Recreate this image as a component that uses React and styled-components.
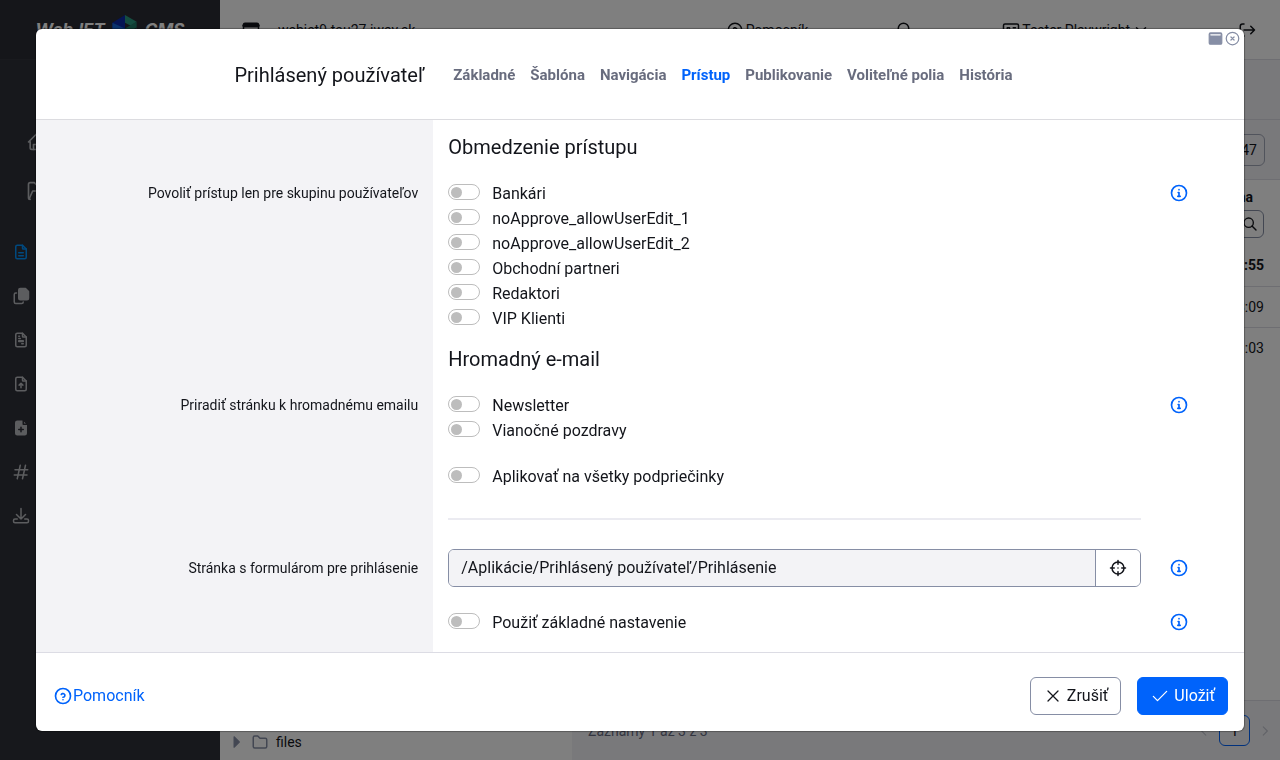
import React, { useState } from "react";
import styled, { createGlobalStyle } from "styled-components";

const GlobalStyle = createGlobalStyle`
  *, *::before, *::after { box-sizing: border-box; }
  body {
    margin: 0;
    background: #ffffff;
    color: #13151b;
    font-family: Roboto, "Noto Sans", sans-serif;
    font-size: 16px;
    line-height: 24px;
  }
  button, input { font: inherit; color: inherit; }
  h1, h2, p, ul { margin: 0; padding: 0; font-weight: 400; }
`;

/* ---------- icons ---------- */

const Svg = styled.svg`
  display: block;
  flex: none;
  width: ${(p) => p.$size}px;
  height: ${(p) => p.$size}px;
  fill: none;
  stroke: currentColor;
  stroke-width: ${(p) => p.$stroke};
  stroke-linecap: round;
  stroke-linejoin: round;
`;

const fileOutline = (
  <>
    <path d="M14 3v4a1 1 0 0 0 1 1h4" />
    <path d="M17 21h-10a2 2 0 0 1 -2 -2v-14a2 2 0 0 1 2 -2h7l5 5v11a2 2 0 0 1 -2 2z" />
  </>
);

const icons = {
  info: (
    <>
      <circle cx="12" cy="12" r="9" />
      <path d="M12 8h.01M11 11.500h1v4.500M10.500 16h3" />
    </>
  ),
  help: (
    <>
      <circle cx="12" cy="12" r="9" />
      <path d="M12 16.500v.01M12 13.500a2.200 2.200 0 0 0 1 -4.200a2.200 2.200 0 0 0 -3 .9" />
    </>
  ),
  check: <path d="M4 12.500l5 5l11 -11" />,
  x: <path d="M6 6l12 12M18 6l-12 12" />,
  circleX: (
    <>
      <circle cx="12" cy="12" r="10" />
      <path d="M9.500 9.500l5 5M14.500 9.500l-5 5" />
    </>
  ),
  windowFilled: (
    <>
      <rect x="2" y="3" width="20" height="18" rx="2" fill="currentColor" />
      <path d="M4.500 6h15" stroke="#ffffff" />
    </>
  ),
  windowOutline: (
    <>
      <rect x="2" y="3" width="20" height="18" rx="2" />
      <path d="M3 6h18" strokeWidth="5" />
    </>
  ),
  target: (
    <>
      <circle cx="12" cy="12" r="8" />
      <path d="M12 2v5M12 17v5M2 12h5M17 12h5M12 12h.01" />
    </>
  ),
  search: (
    <>
      <circle cx="10" cy="10" r="7" />
      <path d="M21 21l-6 -6" />
    </>
  ),
  badge: (
    <>
      <rect x="2" y="4" width="20" height="16" rx="2" />
      <path d="M7 9h3v3h-3zM15 9h3M15 13h3M7 16h10" />
    </>
  ),
  logout: (
    <>
      <path d="M8 4h-2a3 3 0 0 0 -3 3v10a3 3 0 0 0 3 3h2" />
      <path d="M8 12h14M17 7l5 5l-5 5" />
    </>
  ),
  down: <path d="M6 9l6 6l6 -6" />,
  left: <path d="M15 5l-7 7l7 7" />,
  right: <path d="M9 5l7 7l-7 7" />,
  caret: <path d="M7 3l9 9l-9 9z" fill="currentColor" />,
  folder: (
    <path d="M5 4h4l3 3h7a2 2 0 0 1 2 2v9a2 2 0 0 1 -2 2h-14a2 2 0 0 1 -2 -2v-12a2 2 0 0 1 2 -2z" />
  ),
  home: (
    <>
      <path d="M5 12h-2l9 -9l9 9h-2" />
      <path d="M5 12v7a2 2 0 0 0 2 2h10a2 2 0 0 0 2 -2v-7" />
      <path d="M9 21v-6h6v6" />
    </>
  ),
  image: (
    <>
      <path d="M5 22a2 2 0 0 1 -2 -2v-16a2 2 0 0 1 2 -2h5l3 3h7" />
      <path d="M4 21l4 -9h14" />
    </>
  ),
  fileText: (
    <>
      {fileOutline}
      <path d="M9 13h6M9 17h6" />
    </>
  ),
  copy: (
    <>
      <path
        d="M11 2h7l4 4v9a2 2 0 0 1 -2 2h-9a2 2 0 0 1 -2 -2v-11a2 2 0 0 1 2 -2z"
        fill="currentColor"
      />
      <path d="M6 8h-1a2 2 0 0 0 -2 2v10a2 2 0 0 0 2 2h8a2 2 0 0 0 2 -2" />
    </>
  ),
  fileInvoice: (
    <>
      {fileOutline}
      <path d="M9 7h1M9 10h2M9 13h6v1h-6zM13 17h2" />
    </>
  ),
  fileUp: (
    <>
      {fileOutline}
      <path d="M12 17v-6M9.500 13.500l2.500 -2.500l2.500 2.500" />
    </>
  ),
  filePlus: (
    <>
      <path
        d="M17 21h-10a2 2 0 0 1 -2 -2v-14a2 2 0 0 1 2 -2h7l5 5v11a2 2 0 0 1 -2 2z"
        fill="currentColor"
      />
      <path d="M12 11v6M9 14h6M15 2v5h5" stroke="#2e3038" />
    </>
  ),
  hash: <path d="M4 9h17M3 16h17M11 3l-4 18M18 3l-4 18" />,
  download: (
    <path d="M7 16h-3a2 2 0 0 0 -2 2v1a2 2 0 0 0 2 2h16a2 2 0 0 0 2 -2v-1a2 2 0 0 0 -2 -2h-3M6 10l6 6l6 -6M12 2v14" />
  ),
};

function Icon({ name, size = 20, stroke = 2 }) {
  return (
    <Svg viewBox="0 0 24 24" $size={size} $stroke={stroke} aria-hidden="true">
      {icons[name]}
    </Svg>
  );
}

/* ---------- page behind the dialog ---------- */

const Page = styled.div`
  display: flex;
  height: 100vh;
  overflow: hidden;
  font-size: 14px;
`;

const Sidebar = styled.aside`
  flex: 0 0 220px;
  background: #2e3038;
  color: #b9babf;
`;

const Brand = styled.div`
  display: flex;
  align-items: center;
  justify-content: center;
  gap: 6px;
  height: 60px;
  background: #2b2c35;
  border-bottom: 1px solid #32343c;
  color: #ffffff;
  font-family: Inter, sans-serif;
  font-size: 17px;
  font-style: italic;
  font-weight: 700;
`;

const Cube = styled.svg`
  width: 28px;
  height: 30px;
`;

const MainNav = styled.nav`
  display: flex;
  flex-direction: column;
  gap: 29px;
  padding: 72px 26px 42px;
`;

const SubNav = styled.nav`
  display: flex;
  flex-direction: column;
  gap: 26px;
  padding: 0 12px;
`;

const NavLink = styled.a`
  display: flex;
  color: ${(p) => (p.$active ? "#0092ff" : "inherit")};
`;

const Workspace = styled.div`
  flex: 1;
  min-width: 0;
  display: flex;
  flex-direction: column;
`;

const TopBar = styled.header`
  display: flex;
  align-items: center;
  gap: 88px;
  height: 60px;
  padding: 0 24px 0 22px;
  border-bottom: 1px solid #dcdce4;
`;

const TopItem = styled.div`
  display: flex;
  align-items: center;
  gap: ${(p) => p.$gap || 2}px;
  margin-right: ${(p) => (p.$first ? "auto" : "0")};
`;

const Columns = styled.div`
  flex: 1;
  display: flex;
  min-height: 0;
`;

const Tree = styled.div`
  flex: 0 0 352px;
  display: flex;
  flex-direction: column;
  justify-content: flex-end;
  padding: 6px 10px;
`;

const TreeItem = styled.div`
  display: flex;
  align-items: center;
  gap: 7px;
  color: #868ea5;
`;

const TreeLabel = styled.span`
  color: #13151b;
`;

const Records = styled.main`
  flex: 1;
  min-width: 0;
  display: flex;
  flex-direction: column;
`;

const RecordsTitle = styled.div`
  height: 60px;
  background: #f3f3f6;
  border-bottom: 1px solid #dcdce4;
`;

const RecordsTools = styled.div`
  display: flex;
  align-items: center;
  justify-content: flex-end;
  height: 60px;
  padding: 0 15px;
  background: #f3f3f6;
  border-bottom: 1px solid #dcdce4;
`;

const ToolButton = styled.button`
  height: 32px;
  padding: 0 7px 0 12px;
  border: 1px solid #a3a8b9;
  border-radius: 6px;
  background: none;
`;

const Table = styled.table`
  width: 100%;
  border-collapse: collapse;
  text-align: right;
`;

const HeadCell = styled.th`
  padding: ${(p) => (p.$filter ? "0 16px 5px" : "4px 27px 0")};
  line-height: 26px;
`;

const Filter = styled.button`
  display: inline-flex;
  align-items: center;
  justify-content: center;
  width: 29px;
  height: 28px;
  padding: 0;
  border: 1px solid #868ea5;
  border-radius: 0 6px 6px 0;
  background: none;
`;

const Cell = styled.td`
  height: 41px;
  padding: 0 16px;
  border-bottom: ${(p) => (p.$last ? "0" : "1px solid #dcdce4")};
  font-weight: ${(p) => (p.$bold ? 700 : 400)};
`;

const RecordsFooter = styled.footer`
  display: flex;
  align-items: center;
  gap: 8px;
  height: 60px;
  margin-top: auto;
  padding: 0 8px 0 16px;
  background: #f3f3f6;
  border-top: 1px solid #dcdce4;
  color: #686c83;
`;

const Summary = styled.p`
  margin-right: auto;
`;

const PageButton = styled.button`
  display: flex;
  align-items: center;
  justify-content: center;
  width: ${(p) => (p.$current ? 31 : 14)}px;
  height: 31px;
  padding: 0;
  border: ${(p) => (p.$current ? "1px solid #0063fb" : "0")};
  border-radius: 6px;
  background: none;
  color: ${(p) => (p.$current ? "#13151b" : "#c4c6d0")};
`;

/* ---------- dialog ---------- */

const Backdrop = styled.div`
  position: fixed;
  inset: 0;
  display: flex;
  padding: 29px 36px;
  background: rgba(0, 0, 0, 0.5);
`;

const Dialog = styled.form`
  position: relative;
  flex: 1;
  min-width: 0;
  display: flex;
  flex-direction: column;
  border-radius: 6px;
  background: #ffffff;
  box-shadow: 0 0 1px 1px rgba(0, 0, 0, 0.3);
  overflow: hidden;
`;

const WindowControls = styled.div`
  position: absolute;
  top: 2px;
  right: 4px;
  display: flex;
  gap: 2px;
  color: #868ea5;
`;

const PlainButton = styled.button`
  display: flex;
  padding: 0;
  border: 0;
  background: none;
`;

const twoColumns = `
  display: grid;
  grid-template-columns: minmax(0, 49fr) minmax(0, 100fr);
`;

const DialogHeader = styled.header`
  ${twoColumns}
  align-items: center;
  height: 91px;
  padding-top: 2px;
  border-bottom: 1px solid #dcdce0;
`;

const Title = styled.h1`
  padding-right: 9px;
  text-align: right;
  font-size: 20px;
`;

const Tabs = styled.div`
  display: flex;
  gap: 15px;
  padding-left: 20px;
`;

const Tab = styled.button`
  padding: 0;
  border: 0;
  background: none;
  color: ${(p) => (p.$active ? "#0063fb" : "#686c7e")};
  font-size: 15px;
  font-weight: 700;
  white-space: nowrap;
`;

const DialogBody = styled.div`
  flex: 1;
  min-height: 0;
  display: flex;
  flex-direction: column;
  overflow: hidden auto;
`;

const Row = styled.div`
  ${twoColumns}
  flex: ${(p) => (p.$fill ? "1 0 auto" : "none")};
`;

const rowSpace = { none: 0, small: 20, medium: 23, large: 29 };

const LabelCell = styled.div`
  padding: ${(p) => rowSpace[p.$space || "none"]}px 15px 0;
  background: #f3f3f6;
  text-align: right;
  font-size: 14px;
`;

const FieldCell = styled.div`
  display: flex;
  align-items: ${(p) => (p.$middle ? "center" : "flex-start")};
  padding: ${(p) => rowSpace[p.$space || "none"]}px 0 0 15px;
`;

const Field = styled.div`
  flex: 1;
  min-width: 0;
`;

const Aside = styled.div`
  flex: 0 0 103px;
  padding: ${(p) => (p.$middle ? 0 : 2)}px 28px 0;
  color: #0063fb;
`;

const RowLabel = styled.label`
  line-height: ${(p) => (p.$tall ? 38 : 25)}px;
`;

const SectionTitle = styled.h2`
  padding: 15px 0 22px;
  font-size: 20px;
`;

const OptionList = styled.ul`
  padding-bottom: 1px;
  list-style: none;
`;

const Option = styled.label`
  display: flex;
  align-items: center;
  gap: 12px;
  height: 25px;
`;

const Switch = styled.input`
  appearance: none;
  display: flex;
  align-items: center;
  flex: none;
  width: 32px;
  height: 16px;
  margin: 0 0 3px;
  padding: 0 2px;
  border: 1px solid #bdbdbd;
  border-radius: 8px;
  background: #ffffff;

  &::before {
    content: "";
    width: 11px;
    height: 11px;
    border-radius: 50%;
    background: #bdbdbd;
  }

  &:checked {
    justify-content: flex-end;
    border-color: #0063fb;
  }

  &:checked::before {
    background: #0063fb;
  }
`;

const Divider = styled.hr`
  width: 100%;
  height: 2px;
  margin: 0;
  border: 0;
  background: #ebebf1;
`;

const InputGroup = styled.div`
  display: flex;
  height: 38px;
  border: 1px solid #868ea5;
  border-radius: 6px;
  overflow: hidden;
`;

const TextInput = styled.input`
  flex: 1;
  min-width: 0;
  padding: 0 12px;
  border: 0;
  background: #f3f3f6;
`;

const InputButton = styled.button`
  display: flex;
  align-items: center;
  justify-content: center;
  width: 45px;
  padding: 0;
  border: 0;
  border-left: 1px solid #868ea5;
  background: #ffffff;
`;

const DialogFooter = styled.footer`
  display: flex;
  align-items: center;
  gap: 16px;
  height: 79px;
  padding: 8px 16px 0;
  border-top: 1px solid #dcdce4;
`;

const HelpLink = styled.a`
  display: flex;
  align-items: center;
  margin-right: auto;
  padding: 0 1px;
  color: #0063fb;
  text-decoration: none;
`;

const Button = styled.button`
  display: flex;
  align-items: center;
  gap: 4px;
  height: 38px;
  padding: 0 12px;
  border: 1px solid ${(p) => (p.$primary ? "#0063fb" : "#868ea5")};
  border-radius: 6px;
  background: ${(p) => (p.$primary ? "#0063fb" : "#ffffff")};
  color: ${(p) => (p.$primary ? "#ffffff" : "#13151b")};
`;

const tabs = [
  "Základné",
  "Šablóna",
  "Navigácia",
  "Prístup",
  "Publikovanie",
  "Voliteľné polia",
  "História",
];

const userGroups = [
  "Bankári",
  "noApprove_allowUserEdit_1",
  "noApprove_allowUserEdit_2",
  "Obchodní partneri",
  "Redaktori",
  "VIP Klienti",
];

const mailGroups = ["Newsletter", "Vianočné pozdravy"];

const subItems = ["fileText", "copy", "fileInvoice", "fileUp", "filePlus", "hash", "download"];

const times = ["11:55", "13:09", "11:03"];

function InfoButton() {
  return (
    <PlainButton type="button" aria-label="Info">
      <Icon name="info" />
    </PlainButton>
  );
}

function FormRow({ space, label, info, fill, middle, children }) {
  return (
    <Row $fill={fill}>
      <LabelCell $space={space}>{label}</LabelCell>
      <FieldCell $space={space} $middle={middle}>
        <Field>{children}</Field>
        <Aside $middle={middle}>{info && <InfoButton />}</Aside>
      </FieldCell>
    </Row>
  );
}

function SwitchOption({ children }) {
  return (
    <Option>
      <Switch type="checkbox" role="switch" />
      {children}
    </Option>
  );
}

function Options({ items, labelledBy }) {
  return (
    <OptionList role="group" aria-labelledby={labelledBy}>
      {items.map((item) => (
        <li key={item}>
          <SwitchOption>{item}</SwitchOption>
        </li>
      ))}
    </OptionList>
  );
}

function Background() {
  return (
    <Page>
      <Sidebar>
        <Brand>
          WebJET
          <Cube viewBox="0 0 28 31" aria-hidden="true">
            <path d="M14 0L1 8v14l13 8z" fill="#0a2aa8" />
            <path d="M1 8l13 6v16l-13 -8z" fill="#1466d8" />
            <path d="M14 0l12 7l-6 4l-6 -3z" fill="#2a9a80" />
            <path d="M26 7v6l-12 7v-6z" fill="#1f7d68" />
            <path d="M14 20l12 -6v8l-12 8z" fill="#35c2a0" />
          </Cube>
          CMS
        </Brand>
        <MainNav>
          <NavLink href="#home" aria-label="Domov"><Icon name="home" /></NavLink>
          <NavLink href="#pages" aria-label="Stránky"><Icon name="image" /></NavLink>
        </MainNav>
        <SubNav>
          {subItems.map((name) => (
            <NavLink key={name} href={`#${name}`} aria-label={name} $active={name === "fileText"}>
              <Icon name={name} size={18} />
            </NavLink>
          ))}
        </SubNav>
      </Sidebar>
      <Workspace>
        <TopBar>
          <TopItem $gap={18} $first>
            <Icon name="windowOutline" size={18} />
            webjet9.tau27.iway.sk
          </TopItem>
          <TopItem><Icon name="help" size={18} />Pomocník</TopItem>
          <TopItem><Icon name="search" size={18} /></TopItem>
          <TopItem>
            <Icon name="badge" size={18} />
            Tester Playwright
            <Icon name="down" size={18} />
          </TopItem>
          <TopItem><Icon name="logout" size={18} /></TopItem>
        </TopBar>
        <Columns>
          <Tree>
            <TreeItem>
              <Icon name="caret" size={14} />
              <Icon name="folder" size={18} />
              <TreeLabel>files</TreeLabel>
            </TreeItem>
          </Tree>
          <Records>
            <RecordsTitle />
            <RecordsTools><ToolButton type="button">47</ToolButton></RecordsTools>
            <Table>
              <thead>
                <tr><HeadCell>Zmena</HeadCell></tr>
                <tr>
                  <HeadCell $filter>
                    <Filter type="button" aria-label="Hľadať"><Icon name="search" size={16} /></Filter>
                  </HeadCell>
                </tr>
              </thead>
              <tbody>
                {times.map((time, i) => (
                  <tr key={time}>
                    <Cell $bold={i === 0} $last={i === times.length - 1}>{time}</Cell>
                  </tr>
                ))}
              </tbody>
            </Table>
            <RecordsFooter>
              <Summary>Záznamy 1 až 3 z 3</Summary>
              <PageButton type="button" aria-label="Predchádzajúca"><Icon name="left" size={14} /></PageButton>
              <PageButton type="button" $current>1</PageButton>
              <PageButton type="button" aria-label="Nasledujúca"><Icon name="right" size={14} /></PageButton>
            </RecordsFooter>
          </Records>
        </Columns>
      </Workspace>
    </Page>
  );
}

export default function App() {
  const [active, setActive] = useState("Prístup");

  return (
    <>
      <GlobalStyle />
      <Background />
      <Backdrop>
        <Dialog role="dialog" aria-labelledby="dialog-title" onSubmit={(e) => e.preventDefault()}>
          <DialogHeader>
            <Title id="dialog-title">Prihlásený používateľ</Title>
            <Tabs role="tablist">
              {tabs.map((tab) => (
                <Tab
                  key={tab}
                  type="button"
                  role="tab"
                  aria-selected={tab === active}
                  $active={tab === active}
                  onClick={() => setActive(tab)}
                >
                  {tab}
                </Tab>
              ))}
            </Tabs>
          </DialogHeader>
          <WindowControls>
            <PlainButton type="button" aria-label="Maximalizovať"><Icon name="windowFilled" size={15} /></PlainButton>
            <PlainButton type="button" aria-label="Zavrieť"><Icon name="circleX" size={15} /></PlainButton>
          </WindowControls>

          <DialogBody>
            <FormRow><SectionTitle>Obmedzenie prístupu</SectionTitle></FormRow>
            <FormRow
              label={<RowLabel as="span" id="groups-label">Povoliť prístup len pre skupinu používateľov</RowLabel>}
              info
            >
              <Options items={userGroups} labelledBy="groups-label" />
            </FormRow>
            <FormRow><SectionTitle>Hromadný e-mail</SectionTitle></FormRow>
            <FormRow
              label={<RowLabel as="span" id="mail-label">Priradiť stránku k hromadnému emailu</RowLabel>}
              info
            >
              <Options items={mailGroups} labelledBy="mail-label" />
            </FormRow>
            <FormRow space="small">
              <SwitchOption>Aplikovať na všetky podpriečinky</SwitchOption>
            </FormRow>
            <FormRow space="large"><Divider /></FormRow>
            <FormRow
              space="large"
              label={<RowLabel $tall htmlFor="login-page">Stránka s formulárom pre prihlásenie</RowLabel>}
              info
              middle
            >
              <InputGroup>
                <TextInput
                  id="login-page"
                  type="text"
                  readOnly
                  value="/Aplikácie/Prihlásený používateľ/Prihlásenie"
                />
                <InputButton type="button" aria-label="Vybrať stránku"><Icon name="target" size={18} /></InputButton>
              </InputGroup>
            </FormRow>
            <FormRow space="medium" info fill>
              <SwitchOption>Použiť základné nastavenie</SwitchOption>
            </FormRow>
          </DialogBody>

          <DialogFooter>
            <HelpLink href="#help"><Icon name="help" />Pomocník</HelpLink>
            <Button type="button"><Icon name="x" stroke={1.5} />Zrušiť</Button>
            <Button type="submit" $primary><Icon name="check" stroke={1.5} />Uložiť</Button>
          </DialogFooter>
        </Dialog>
      </Backdrop>
    </>
  );
}
